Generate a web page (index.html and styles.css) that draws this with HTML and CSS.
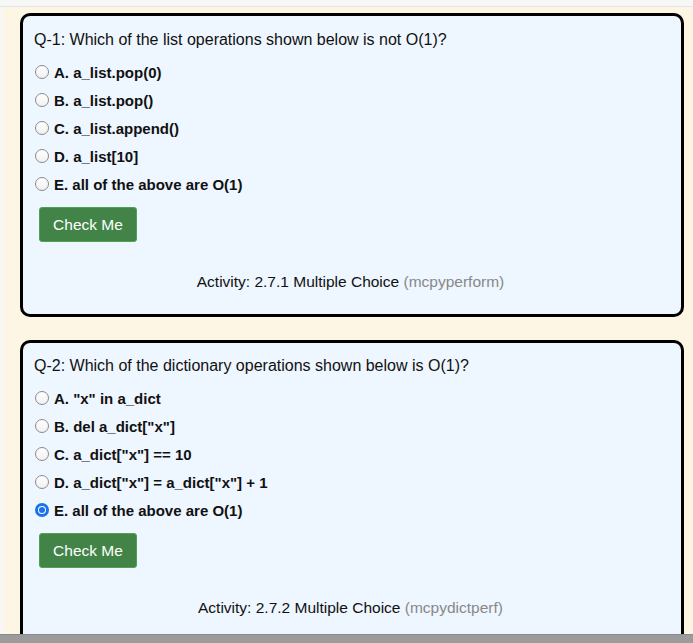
FILE: index.html
```html
<!DOCTYPE html>
<html>
<head>
<meta charset="utf-8">
<link rel="stylesheet" href="styles.css">
</head>
<body>
<div class="topbar"></div>
<div class="page">
  <div class="card card-first">
    <p class="question">Q-1: Which of the list operations shown below is not O(1)?</p>
    <ul class="options">
      <li><span class="radio"></span><span class="label">A. a_list.pop(0)</span></li>
      <li><span class="radio"></span><span class="label">B. a_list.pop()</span></li>
      <li><span class="radio"></span><span class="label">C. a_list.append()</span></li>
      <li><span class="radio"></span><span class="label">D. a_list[10]</span></li>
      <li><span class="radio"></span><span class="label">E. all of the above are O(1)</span></li>
    </ul>
    <button class="check">Check Me</button>
    <p class="activity">Activity: 2.7.1 Multiple Choice <span class="id">(mcpyperform)</span></p>
  </div>
  <div class="card">
    <p class="question">Q-2: Which of the dictionary operations shown below is O(1)?</p>
    <ul class="options">
      <li><span class="radio"></span><span class="label">A. "x" in a_dict</span></li>
      <li><span class="radio"></span><span class="label">B. del a_dict["x"]</span></li>
      <li><span class="radio"></span><span class="label">C. a_dict["x"] == 10</span></li>
      <li><span class="radio"></span><span class="label">D. a_dict["x"] = a_dict["x"] + 1</span></li>
      <li><span class="radio checked"></span><span class="label">E. all of the above are O(1)</span></li>
    </ul>
    <button class="check">Check Me</button>
    <p class="activity">Activity: 2.7.2 Multiple Choice <span class="id">(mcpydictperf)</span></p>
  </div>
</div>
<div class="statusbar"></div>
</body>
</html>
```
FILE: styles.css
```css
html, body {
  margin: 0;
  padding: 0;
  height: 100%;
  overflow: hidden;
}
body {
  background: #f7f7f7;
  font-family: "Liberation Sans", Arial, sans-serif;
  color: #111;
}
.topbar {
  height: 6px;
  border-bottom: 1px solid #e4e4e4;
}
.page {
  margin-left: 3px;
  background: #fdf6e4;
  padding: 6px 9px 40px 17px;
}
.card {
  background: #eef6ff;
  border: 3px solid #000;
  border-radius: 10px;
  padding: 13px 14px 24px 11px;
}
.card-first {
  margin-bottom: 23px;
  padding-top: 14px;
  padding-bottom: 22px;
}
.question {
  margin: 0;
  font-size: 16px;
  line-height: 20px;
}
.options {
  list-style: none;
  margin: 8px 0 9px;
  padding: 0;
}
.options li {
  height: 28px;
  display: flex;
  align-items: center;
}
.radio {
  width: 12px;
  height: 12px;
  border: 1px solid #8a8a8a;
  border-radius: 50%;
  background: linear-gradient(#ffffff, #f1f1f1);
  margin: 0 5px 0 1px;
  box-sizing: content-box;
  flex: none;
}
.radio.checked {
  width: 8px;
  height: 8px;
  border: 3px solid #1a73e8;
  background: #fff;
  position: relative;
}
.radio.checked::after {
  content: "";
  position: absolute;
  left: 1px;
  top: 1px;
  width: 6px;
  height: 6px;
  border-radius: 50%;
  background: #1a73e8;
}
.label {
  font-weight: bold;
  font-size: 15px;
}
.check {
  display: block;
  margin-left: 5px;
  width: 98px;
  height: 35px;
  background: #428447;
  border: 1px solid #4ea251;
  border-radius: 3px;
  color: #fff;
  font-family: "Liberation Sans", Arial, sans-serif;
  font-size: 15.5px;
  padding: 0;
}
.activity {
  margin: 30px 0 0;
  text-align: center;
  font-size: 15.5px;
  line-height: 20px;
}
.id {
  color: #888;
}
.statusbar {
  position: fixed;
  left: 0;
  right: 0;
  bottom: 0;
  height: 8px;
  background: #9b9b9b;
  border-top: 1px solid #8a8a8a;
}
```
